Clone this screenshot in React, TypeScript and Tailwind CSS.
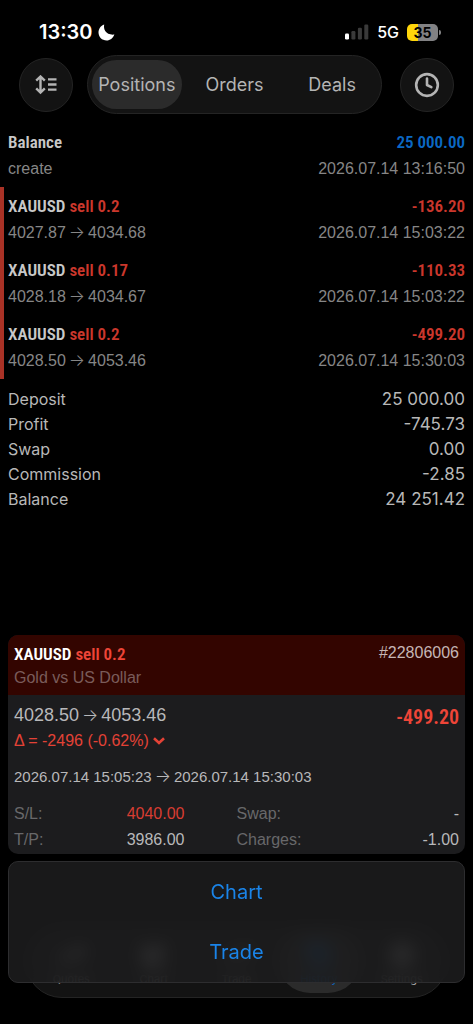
import { ChartCandlestick, Clock, History, Settings, TrendingUp } from 'lucide-react';

type Deal = {
  id: number;
  lots: string;
  open: string;
  close: string;
  profit: string;
  time: string;
};

const deals: Deal[] = [
  { id: 1, lots: '0.2', open: '4027.87', close: '4034.68', profit: '-136.20', time: '2026.07.14 15:03:22' },
  { id: 2, lots: '0.17', open: '4028.18', close: '4034.67', profit: '-110.33', time: '2026.07.14 15:03:22' },
  { id: 3, lots: '0.2', open: '4028.50', close: '4053.46', profit: '-499.20', time: '2026.07.14 15:30:03' },
];

const summary = [
  ['Deposit', '25 000.00'],
  ['Profit', '-745.73'],
  ['Swap', '0.00'],
  ['Commission', '-2.85'],
  ['Balance', '24 251.42'],
];

const condensed = "font-['Roboto_Condensed',Roboto,sans-serif] font-semibold";
const helvetica = "font-['Liberation_Sans',Arial,sans-serif]";

function Arrow() {
  return <span className="mx-[3px] font-[Inter,sans-serif] text-[17px] leading-5 font-light">→</span>;
}

function StatusBar() {
  return (
    <div className="flex h-[55px] items-end justify-between pb-[13px] pl-[39px] pr-[32px] text-white">
      <div className="flex h-5 items-center gap-1.5">
        <span className="text-[20px] leading-5 font-semibold">13:30</span>
        <svg viewBox="0 0 17 17" className="h-[17px] w-[17px]" fill="currentColor" aria-hidden="true">
          <path d="M6.2 0.6C5.2 5.6 7.8 11.4 16.4 10.6C15 14.4 12 16.6 8.6 16.6C4 16.6 0.5 13 0.5 8.6C0.5 5 2.8 1.8 6.2 0.6Z" />
        </svg>
      </div>
      <div className="flex h-5 items-center">
        <svg viewBox="0 0 24 16" className="h-4 w-6" aria-hidden="true">
          <rect x="0" y="9.5" width="4" height="6" rx="1.2" fill="#fff" />
          <rect x="6.4" y="7" width="4" height="8.5" rx="1.2" fill="#3a3a3a" />
          <rect x="12.9" y="3.8" width="4" height="11.7" rx="1.2" fill="#3a3a3a" />
          <rect x="19.3" y="0.5" width="4" height="15" rx="1.2" fill="#3a3a3a" />
        </svg>
        <span className="ml-2 text-[16px] leading-5 font-medium">5G</span>
        <div className="ml-2 flex h-[17px] w-[31px] items-center justify-center rounded-[5px] bg-linear-to-r from-[#ffd60a] from-35% to-[#828284] to-35% text-[14px] font-bold text-black">
          35
        </div>
        <div className="ml-px h-[5px] w-[2px] rounded-r-full bg-[#828284]" />
      </div>
    </div>
  );
}

function Toolbar() {
  return (
    <div className="flex h-[59px] items-center px-[19px] text-[#b4b4b4]">
      <button
        type="button"
        aria-label="Sort"
        className="flex h-[54px] w-[54px] shrink-0 items-center justify-center rounded-full border border-[#242424] bg-[#131313]"
      >
        <svg viewBox="0 0 22 20" className="h-5 w-[22px]" fill="none" stroke="currentColor" strokeWidth="2.4" aria-hidden="true">
          <path d="M5.5 2v15M1.2 5.6l4.3-4.1 4.3 4.1M1.2 13.4l4.3 4.1 4.3-4.1" />
          <path d="M13 4.4h8.5M13 9.5h8.5M13 14.6h8.5" />
        </svg>
      </button>
      <div className="ml-[14px] grid h-[59px] flex-1 grid-cols-3 rounded-full border border-[#242424] bg-[#131313] text-[18px]">
        <button type="button" className="m-1 rounded-full bg-[#2b2b2b]">Positions</button>
        <button type="button" className="m-1 rounded-full">Orders</button>
        <button type="button" className="m-1 rounded-full">Deals</button>
      </div>
      <button
        type="button"
        aria-label="Period"
        className="ml-[18px] flex h-[54px] w-[54px] shrink-0 items-center justify-center rounded-full border border-[#242424] bg-[#131313]"
      >
        <Clock className="h-[26px] w-[26px]" strokeWidth={2.4} />
      </button>
    </div>
  );
}

function DealRow({ deal }: { deal: Deal }) {
  return (
    <li className="h-16 border-l-4 border-[#a93226] pt-1.5 pr-2 pl-1">
      <div className={`${condensed} flex justify-between text-[17px] leading-[26px]`}>
        <span className="text-[#c8c8c8]">
          XAUUSD <span className="text-[#cb372c]">sell {deal.lots}</span>
        </span>
        <span className="text-[#cb372c]">{deal.profit}</span>
      </div>
      <div className={`${helvetica} mt-px flex justify-between text-[16px] leading-[26px] text-[#868686]`}>
        <span>{deal.open}<Arrow />{deal.close}</span>
        <span>{deal.time}</span>
      </div>
    </li>
  );
}

function PositionCard() {
  return (
    <section className={`${helvetica} overflow-hidden rounded-[10px] bg-[#1c1c1e] text-[16px] leading-[26px] text-[#b8b8ba]`}>
      <header className="h-[60px] bg-[#330500] px-1.5 pt-1.5">
        <div className="flex justify-between">
          <span className={`${condensed} text-[17px] text-white`}>
            XAUUSD <span className="text-[#ee4538]">sell 0.2</span>
          </span>
          <span className="leading-6 text-[#c6b6b5]">#22806006</span>
        </div>
        <div className="mt-px leading-5 text-[#7a5c5a]">Gold vs US Dollar</div>
      </header>
      <div className="px-1.5 pt-[7px] pb-px">
        <div className="flex h-[26px] items-center justify-between">
          <span className="text-[18px]">4028.50<Arrow />4053.46</span>
          <span className={`${condensed} pt-1 text-[20px] leading-[22px] text-[#ee4538]`}>-499.20</span>
        </div>
        <div className="flex items-center gap-1 text-[#e34236]">
          <span>Δ = -2496 (-0.62%)</span>
          <svg viewBox="0 0 12 8" className="h-2 w-3" fill="none" stroke="currentColor" strokeWidth="2.6" aria-hidden="true">
            <path d="M1 1.2l5 4.8 5-4.8" />
          </svg>
        </div>
        <div className="mt-2.5 h-[26px] text-[15px]">2026.07.14 15:05:23<Arrow />2026.07.14 15:30:03</div>
        <dl className="mt-[11px] grid grid-cols-2">
          <div className="flex justify-between pr-[52px]">
            <dt className="text-[#68686a]">S/L:</dt>
            <dd className="text-[#d83d32]">4040.00</dd>
          </div>
          <div className="flex justify-between">
            <dt className="text-[#68686a]">Swap:</dt>
            <dd>-</dd>
          </div>
          <div className="flex justify-between pr-[52px]">
            <dt className="text-[#68686a]">T/P:</dt>
            <dd>3986.00</dd>
          </div>
          <div className="flex justify-between">
            <dt className="text-[#68686a]">Charges:</dt>
            <dd>-1.00</dd>
          </div>
        </dl>
      </div>
    </section>
  );
}

const tab = 'flex flex-col items-center justify-end gap-1 rounded-full pb-2';

function TabBar() {
  return (
    <nav className="absolute inset-x-[17px] -bottom-[15px] grid h-[74px] grid-cols-5 rounded-full border border-[#242424] bg-[#131313] p-1 text-[11px] leading-3 text-[#b4b4b4]">
      <a href="#quotes" className={tab}><TrendingUp className="h-7 w-7" strokeWidth={3} />Quotes</a>
      <a href="#chart" className={tab}><ChartCandlestick className="h-7 w-7" strokeWidth={3} />Chart</a>
      <a href="#trade" className={tab}><TrendingUp className="h-7 w-7" />Trade</a>
      <a href="#history" className={`${tab} bg-[#2b2b2b] text-[#0a6fd0]`}><History className="h-7 w-7" strokeWidth={3} />History</a>
      <a href="#settings" className={tab}><Settings className="h-7 w-7" strokeWidth={3} />Settings</a>
    </nav>
  );
}

export default function App() {
  return (
    <div className="flex min-h-screen flex-col bg-black font-[Inter,sans-serif]">
      <StatusBar />
      <Toolbar />

      <main className="pt-[9px]">
        {/* Balance operation */}
        <div className="h-16 px-2 pt-1.5">
          <div className={`${condensed} flex justify-between text-[17px] leading-[26px]`}>
            <span className="text-[#c8c8c8]">Balance</span>
            <span className="text-[#0b68c4]">25 000.00</span>
          </div>
          <div className={`${helvetica} mt-px flex justify-between text-[16px] leading-[26px] text-[#868686]`}>
            <span>create</span>
            <span>2026.07.14 13:16:50</span>
          </div>
        </div>

        <ul>
          {deals.map((deal) => (
            <DealRow key={deal.id} deal={deal} />
          ))}
        </ul>

        {/* Totals */}
        <dl className="px-2 pt-2 text-[16px] leading-[25px] text-[#b8b8b8]">
          {summary.map(([label, value]) => (
            <div key={label} className="flex justify-between">
              <dt>{label}</dt>
              <dd className="text-[17px]">{value}</dd>
            </div>
          ))}
        </dl>
      </main>

      <div className="mt-auto px-2 pb-[41px]">
        <PositionCard />
        <div className="relative mt-[7px]">
          <TabBar />
          <div className="relative flex flex-col rounded-[10px] border border-[#2d2d2f] bg-[#1c1c1e]/88 text-[20px] text-[#1a84e8] backdrop-blur-[8px]">
            <button type="button" className="h-[60px]">Chart</button>
            <button type="button" className="h-[60px]">Trade</button>
          </div>
        </div>
      </div>
    </div>
  );
}
